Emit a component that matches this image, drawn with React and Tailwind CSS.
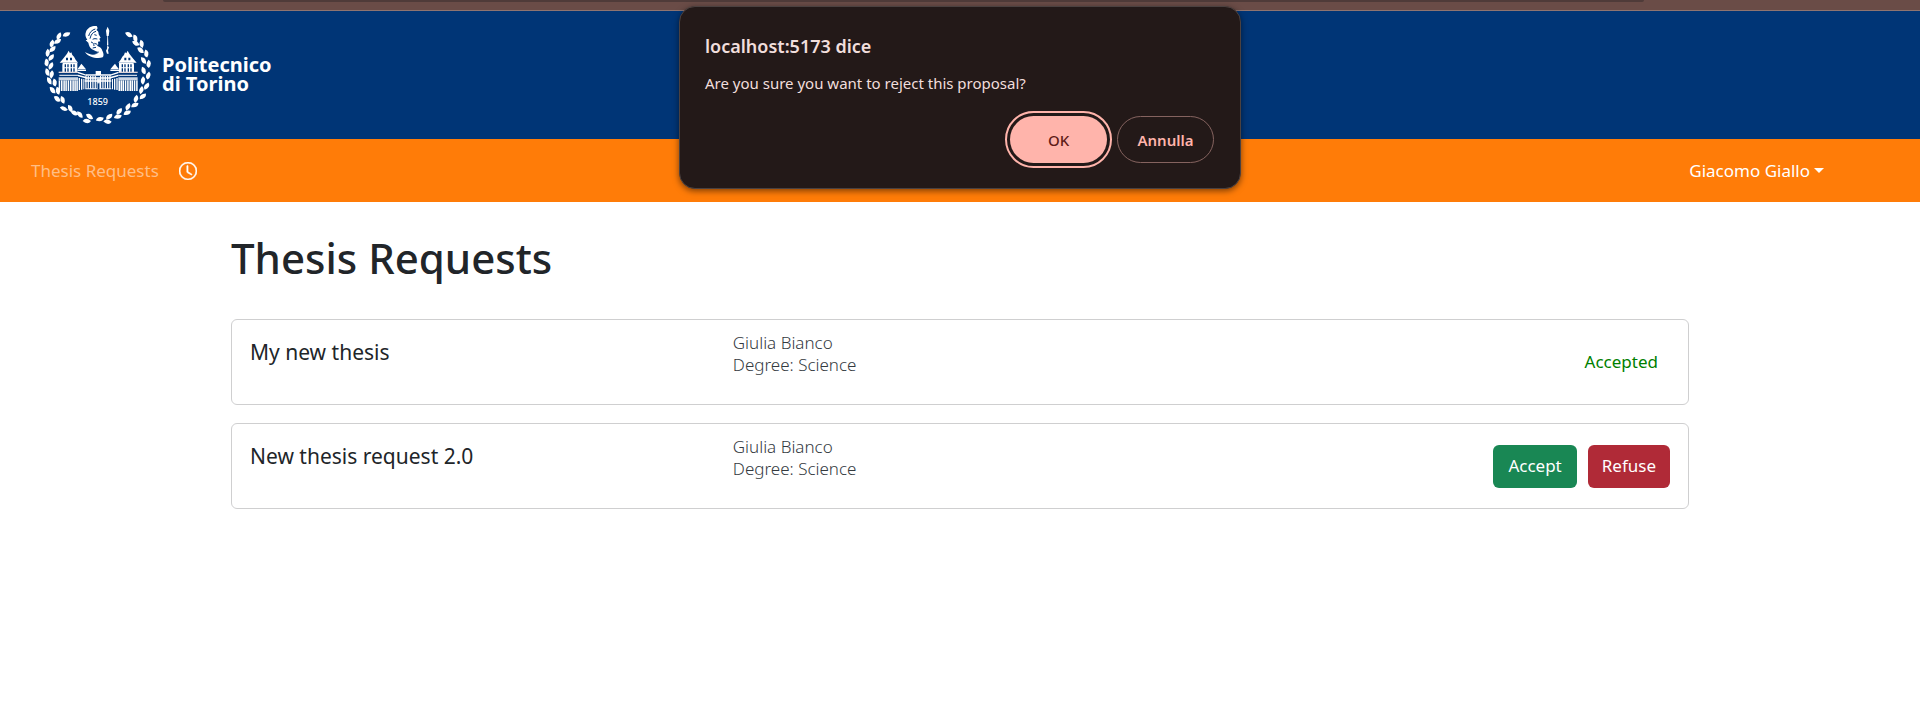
const leaves = [
  [80, 43, -22], [57, 48, -65], [53, 64, -30], [36, 70, -75], [38, 87, -42], [23, 98, -85], [34, 112, -52],
  [20, 128, 85], [33, 137, -65], [22, 157, 75], [35, 163, -80], [28, 183, 62], [44, 188, 82], [38, 211, 50],
  [54, 213, 78], [52, 237, 40], [68, 240, 72], [72, 266, 20], [91, 266, 62], [104, 279, 25], [120, 284, 50],
  [141, 303, 5], [149, 290, 35], [180, 297, -15], [203, 305, 5], [208, 290, -40], [234, 290, -15], [238, 274, -50],
  [262, 278, -25], [264, 260, -62], [285, 255, -25], [288, 236, -75], [309, 229, -38], [304, 210, -75],
  [320, 198, -58], [309, 181, -85], [325, 166, -75], [311, 152, 72], [326, 131, -88], [311, 122, 55],
  [319, 101, 82], [302, 91, 42], [305, 72, 80], [288, 70, 30], [286, 55, 70], [267, 44, 30],
];

const baseBars = [56, 63, 70, 76, 83, 90, 97, 103, 109];
const wingBars = [136, 143, 150, 157, 164, 180, 187, 194, 201, 208];

function Tower() {
  return (
    <g>
      <path d="M86 92l-5 9-7 9-6 8-9 10h55l-7-9-5-9-5-5-3-8-4 3z" />
      <path d="M68 129h44v4H68zM67 133h7v24h-7zM78 133h4v24h-4zM86 133h6v24h-6zM96 133h4v24h-4zM104 133h8v24h-8zM68 142h44v3H68z" />
      <path d="M56 155h58v4H56z" fill="#dcd3d8" />
      <path d="M58 164h56v4H58zM56 172h58v9H56z" opacity=".8" />
      <path d="M78 113h6v8h-6zM90 113h6v8h-6z" fill="#003576" />
      <path d="M112 149h26v4h-26zM124 131l-5 8-7 9h26l-8-10z" />
      <path d="M114 155l26 9v4l-26-8zM114 164l26 7v5l-26-7z" />
      <path d="M116 174h4v36h-4zM123 176h4v33h-4zM130 177h3v31h-3z" />
      {baseBars.map((x) => (
        <rect key={x} x={x} y="181" width="4.6" height="32" />
      ))}
    </g>
  );
}

function Crest() {
  return (
    <svg viewBox="0 0 360 330" className="h-[110px] w-[120px] shrink-0" fill="#fff" role="img" aria-label="Politecnico di Torino">
      {leaves.map(([x, y, a]) => (
        <path key={`${x}-${y}`} d="M-13 1Q-5-13 12-1Q4 13-13 1" transform={`translate(${x} ${y}) rotate(${a})`} />
      ))}
      <path d="M170 18c-14-1-27 4-32 17-4 9-1 17 4 24l-5 2 8 7c2 8 4 15 11 20l12 6 16 4c3-6 1-12-4-16l-9-5 4-4-1-8 7-1-3-8 4-3-6-10c0-7-2-11-7-13 4-3 5-6 1-12z" />
      <path d="M150 56c3-13 8-19 18-22M146 48c3-12 10-18 20-21M153 66c6 1 9 6 9 12M158 58c5-3 9-2 14-1M163 70l9 3M158 84l10-2M163 44l7 2" stroke="#003576" strokeWidth="3" fill="none" />
      <path d="M135 96c12 8 26 10 35 4 7-4 9-9 12-16 7 10 12 21 6 28-15 6-43 0-53-16z" />
      <path d="M147 99c10 6 22 5 30-4" stroke="#003576" strokeWidth="2" fill="none" />
      <path d="M203 20l5 12-2 16h-2l1 28h-4l1-28h-2l-2-16zM202 76l5 6-3 9 2 10h-5l-3-9 3-6z" />
      <Tower />
      <g transform="translate(349 0) scale(-1 1)">
        <Tower />
      </g>
      <path d="M138 163h74v4h-74zM138 172h74v4h-74zM167 153h16v13h-16zM136 205h78v3h-78z" />
      {wingBars.map((x) => (
        <rect key={x} x={x} y="168" width="3.6" height="38" />
      ))}
      <path d="M134 179h80v7h-80z" opacity=".75" />
      <path d="M170 176h11v30h-11z" opacity=".85" />
      <path d="M173 190h5v18h-5z" fill="#003576" />
      <text x="173" y="256" textAnchor="middle" className="font-['Noto_Sans',sans-serif] text-[27px] font-medium">
        1859
      </text>
    </svg>
  );
}

function RequestCard({ title, children }) {
  return (
    <li className="flex min-h-[86px] rounded-md border border-[#cfcfd0] px-[18px]">
      <h2 className="w-[34%] pt-[18px] text-[21px] leading-7">{title}</h2>
      <p className="flex-1 pt-3 text-[17px] leading-[22px] font-light text-[#343a3f]">
        Giulia Bianco
        <br />
        Degree: Science
      </p>
      <div className="flex items-center gap-[11px]">{children}</div>
    </li>
  );
}

export default function App() {
  return (
    <div className="relative bg-white font-['Noto_Sans',sans-serif] text-[17px] leading-[26px] text-[#212529]">
      <div className="h-[11px] border-b border-[#8f7470] bg-[#6a4c47] pr-[276px] pl-[163px]">
        <div className="h-[2px] rounded-b-md bg-[#4f3b39]" />
      </div>

      <header className="flex h-32 items-start bg-[#003576] px-10 pt-[9px] text-white">
        <Crest />
        <div className="ml-[2px] pt-[35px] text-[20px] leading-[19px] font-bold">
          Politecnico
          <br />
          di Torino
        </div>
      </header>

      <nav className="flex h-[63px] items-center justify-between bg-[#ff7c08] pr-24 pl-[31px]">
        <div className="flex items-center gap-5">
          <a href="#requests" className="text-[#ffbe85]">Thesis Requests</a>
          <button type="button" aria-label="Virtual clock" className="text-white">
            <svg viewBox="0 0 16 16" className="size-[18px]" fill="currentColor">
              <path d="M8 3.5a.5.5 0 0 0-1 0V9a.5.5 0 0 0 .252.434l3.5 2a.5.5 0 0 0 .496-.868L8 8.71z" stroke="currentColor" strokeWidth=".6" />
              <path d="M8 16A8 8 0 1 0 8 0a8 8 0 0 0 0 16m7-8A7 7 0 1 1 1 8a7 7 0 0 1 14 0" stroke="currentColor" strokeWidth=".5" />
            </svg>
          </button>
        </div>
        <button type="button" className="flex items-center gap-1 text-white">
          Giacomo Giallo
          <svg viewBox="0 0 10 5" className="h-[5px] w-[10px]" fill="currentColor">
            <path d="M0 0h10L5 5z" />
          </svg>
        </button>
      </nav>

      <main id="requests" className="mx-auto max-w-[1458px] pt-[30px]">
        <h1 className="mb-[35px] text-[42px] leading-[52px] font-medium">Thesis Requests</h1>
        <ul className="flex flex-col gap-[18px]">
          <RequestCard title="My new thesis">
            <span className="pr-3 text-[#008000]">Accepted</span>
          </RequestCard>
          <RequestCard title="New thesis request 2.0">
            <button type="button" className="h-[43px] rounded-md bg-[#198754] px-[15px] text-white">Accept</button>
            <button type="button" className="h-[43px] rounded-md bg-[#b02a37] px-[14px] text-white">Refuse</button>
          </RequestCard>
        </ul>
      </main>

      <div
        role="alertdialog"
        aria-labelledby="dialog-title"
        aria-describedby="dialog-text"
        className="absolute top-[6px] left-1/2 w-[562px] -translate-x-1/2 rounded-2xl border border-[#4b4140] bg-[#231918] px-[25px] pt-[26px] pb-[25px] text-[15px] text-[#f1dedc] shadow-[0_2px_6px_rgba(0,0,0,0.5)]"
      >
        <h2 id="dialog-title" className="text-[18px] leading-[26px] font-semibold">localhost:5173 dice</h2>
        <p id="dialog-text" className="mt-3 leading-6">Are you sure you want to reject this proposal?</p>
        <div className="mt-[21px] flex justify-end gap-[10px] pr-px">
          <button type="button" className="h-[47px] w-[97px] rounded-3xl bg-[#ffb4ab] font-medium text-[#5f1c18] outline-2 outline-offset-3 outline-[#ffb4ab]">OK</button>
          <button type="button" className="h-[47px] w-[97px] rounded-3xl border border-[#85635f] font-semibold text-[#ffb4ab]">Annulla</button>
        </div>
      </div>
    </div>
  );
}
